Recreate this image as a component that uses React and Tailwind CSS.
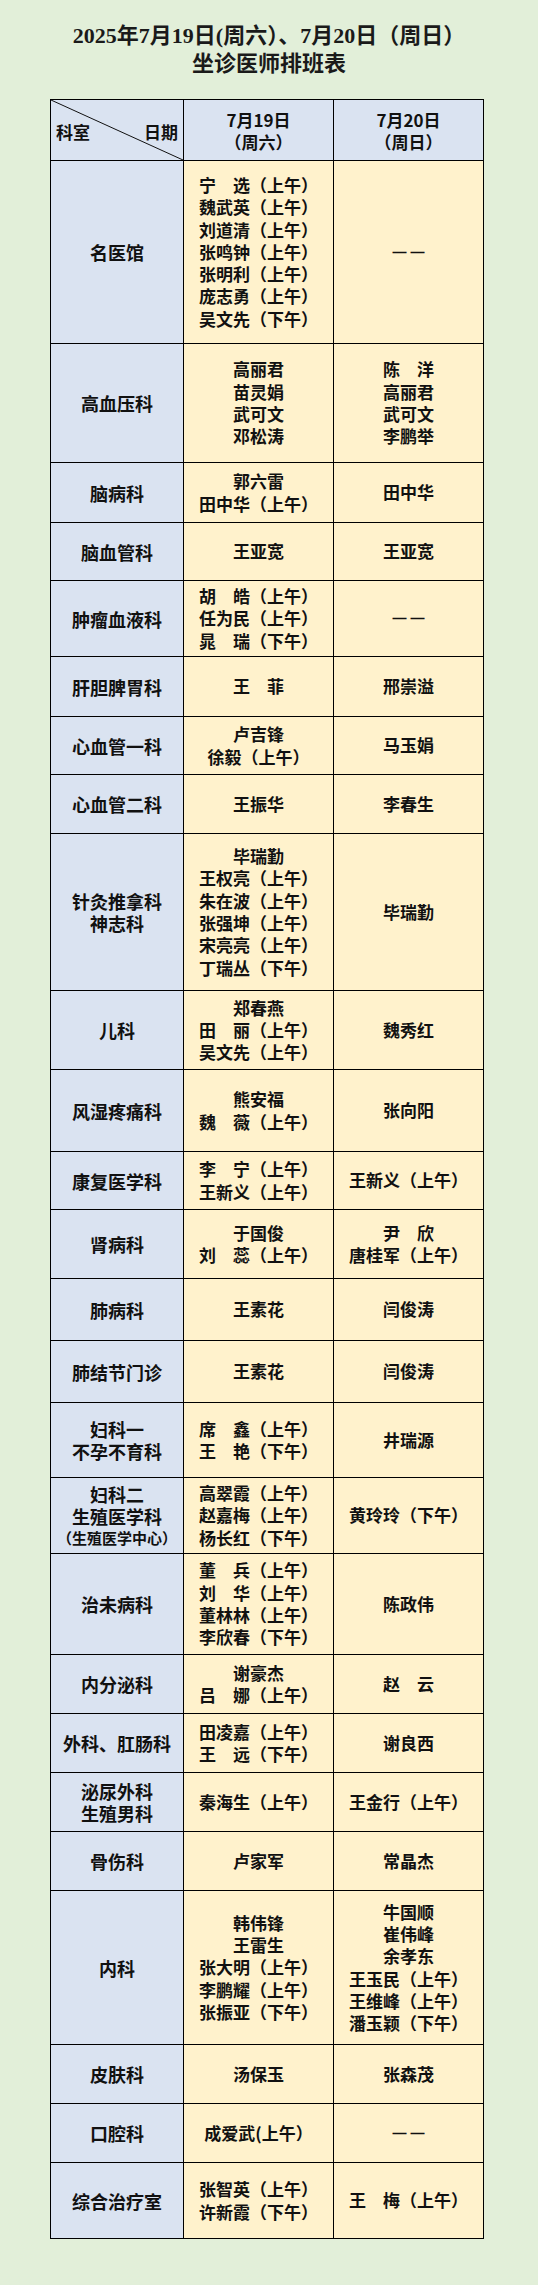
const S = "\u3000";

const rows = [
  { h: "h-[183px]", d: ["名医馆"], a: [`宁${S}选（上午）`, "魏武英（上午）", "刘道清（上午）", "张鸣钟（上午）", "张明利（上午）", "庞志勇（上午）", "吴文先（下午）"], b: null },
  { h: "h-[119px]", d: ["高血压科"], a: ["高丽君", "苗灵娟", "武可文", "邓松涛"], b: [`陈${S}洋`, "高丽君", "武可文", "李鹏举"] },
  { h: "h-[60px]", d: ["脑病科"], a: ["郭六雷", "田中华（上午）"], b: ["田中华"] },
  { h: "h-[58px]", d: ["脑血管科"], a: ["王亚宽"], b: ["王亚宽"] },
  { h: "h-[76px]", d: ["肿瘤血液科"], a: [`胡${S}皓（上午）`, "任为民（上午）", `晁${S}瑞（下午）`], b: null },
  { h: "h-[60px]", d: ["肝胆脾胃科"], a: [`王${S}菲`], b: ["邢崇溢"] },
  { h: "h-[58px]", d: ["心血管一科"], a: ["卢吉锋", "徐毅（上午）"], b: ["马玉娟"] },
  { h: "h-[59px]", d: ["心血管二科"], a: ["王振华"], b: ["李春生"] },
  { h: "h-[157px]", d: ["针灸推拿科", "神志科"], a: ["毕瑞勤", "王权亮（上午）", "朱在波（上午）", "张强坤（上午）", "宋亮亮（上午）", "丁瑞丛（下午）"], b: ["毕瑞勤"] },
  { h: "h-[79px]", d: ["儿科"], a: ["郑春燕", `田${S}丽（上午）`, "吴文先（上午）"], b: ["魏秀红"] },
  { h: "h-[82px]", d: ["风湿疼痛科"], a: ["熊安福", `魏${S}薇（上午）`], b: ["张向阳"] },
  { h: "h-[58px]", d: ["康复医学科"], a: [`李${S}宁（上午）`, "王新义（上午）"], b: ["王新义（上午）"] },
  { h: "h-[69px]", d: ["肾病科"], a: ["于国俊", `刘${S}蕊（上午）`], b: [`尹${S}欣`, "唐桂军（上午）"] },
  { h: "h-[62px]", d: ["肺病科"], a: ["王素花"], b: ["闫俊涛"] },
  { h: "h-[62px]", d: ["肺结节门诊"], a: ["王素花"], b: ["闫俊涛"] },
  { h: "h-[75px]", d: ["妇科一", "不孕不育科"], a: [`席${S}鑫（上午）`, `王${S}艳（下午）`], b: ["井瑞源"] },
  { h: "h-[76px]", d: ["妇科二", "生殖医学科"], small: "（生殖医学中心）", a: ["高翠霞（上午）", "赵嘉梅（上午）", "杨长红（下午）"], b: ["黄玲玲（下午）"] },
  { h: "h-[101px]", d: ["治未病科"], a: [`董${S}兵（上午）`, `刘${S}华（上午）`, "董林林（上午）", "李欣春（下午）"], b: ["陈政伟"] },
  { h: "h-[59px]", d: ["内分泌科"], a: ["谢豪杰", `吕${S}娜（上午）`], b: [`赵${S}云`] },
  { h: "h-[59px]", d: ["外科、肛肠科"], a: ["田凌嘉（上午）", `王${S}远（下午）`], b: ["谢良西"] },
  { h: "h-[59px]", d: ["泌尿外科", "生殖男科"], a: ["秦海生（上午）"], b: ["王金行（上午）"] },
  { h: "h-[59px]", d: ["骨伤科"], a: ["卢家军"], b: ["常晶杰"] },
  { h: "h-[154px]", d: ["内科"], a: ["韩伟锋", "王雷生", "张大明（上午）", "李鹏耀（上午）", "张振亚（下午）"], b: ["牛国顺", "崔伟峰", "余孝东", "王玉民（上午）", "王维峰（上午）", "潘玉颖（下午）"] },
  { h: "h-[59px]", d: ["皮肤科"], a: ["汤保玉"], b: ["张森茂"] },
  { h: "h-[59px]", d: ["口腔科"], a: ["成爱武(上午）"], b: null },
  { h: "h-[76px]", d: ["综合治疗室"], a: ["张智英（上午）", "许新霞（下午）"], b: [`王${S}梅（上午）`] },
];

function Dash() {
  return (
    <span className="font-['Liberation_Sans',sans-serif] text-[14px] tracking-[4px] mr-[-4px]">——</span>
  );
}

function Names({ items }) {
  if (!items) return <Dash />;
  return (
    <div className="flex flex-col items-center text-center text-[17px] leading-[22.3px] whitespace-pre">
      {items.map((t, i) => (
        <div key={i}>{t}</div>
      ))}
    </div>
  );
}

export default function App() {
  return (
    <div className="w-full min-h-[2285px] bg-[#e2efd9] text-[#111] font-['Noto_Sans_CJK_SC',sans-serif] font-bold">
      <div className="pt-[22px] text-center font-['Liberation_Serif','Noto_Sans_CJK_SC',serif] text-[22px] leading-[28px] text-[#1a1a1a]">
        <div>2025年7月19日(周六）、7月20日（周日）</div>
        <div>坐诊医师排班表</div>
      </div>

      <div className="mt-[21px] ml-[50px] w-[434px] border-l border-r border-t border-black">
        <div className="grid grid-cols-[133px_150px_149px] h-[61px] border-b border-black bg-[#dae3f1] text-[17px] leading-[22px]">
          <div className="relative flex items-center justify-between border-r border-black pl-[5px] pr-[5px] pt-[3px]">
            <svg className="absolute inset-0 w-full h-full" viewBox="0 0 132 60" preserveAspectRatio="none">
              <line x1="0" y1="0" x2="132" y2="60" stroke="#111" strokeWidth="1" />
            </svg>
            <span className="relative">科室</span>
            <span className="relative">日期</span>
          </div>
          <div className="flex flex-col items-center justify-center border-r border-black pt-[2px]">
            <div>7月19日</div>
            <div>（周六）</div>
          </div>
          <div className="flex flex-col items-center justify-center pt-[2px]">
            <div>7月20日</div>
            <div>（周日）</div>
          </div>
        </div>

        {rows.map((r, i) => (
          <div key={i} className={`grid grid-cols-[133px_150px_149px] border-b border-black ${r.h}`}>
            <div className="flex flex-col items-center justify-center border-r border-black bg-[#dae3f1] text-center text-[18px] leading-[22px]">
              {r.d.map((t, j) => (
                <div key={j}>{t}</div>
              ))}
              {r.small && <div className="text-[15px] leading-[21px]">{r.small}</div>}
            </div>
            <div className="flex items-center justify-center border-r border-black bg-[#fff2cc]">
              <Names items={r.a} />
            </div>
            <div className="flex items-center justify-center bg-[#fff2cc]">
              <Names items={r.b} />
            </div>
          </div>
        ))}
      </div>
    </div>
  );
}
